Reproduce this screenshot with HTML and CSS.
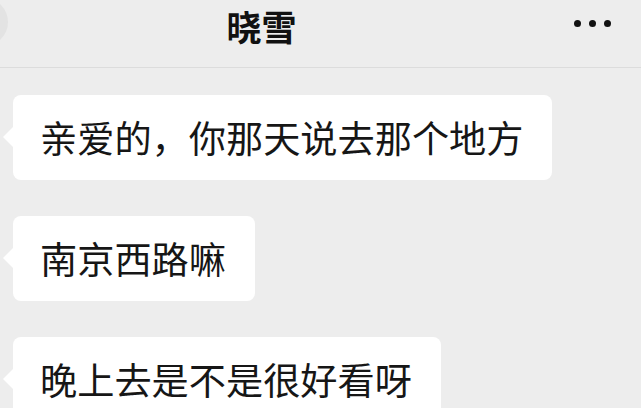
FILE: index.html
```html
<!DOCTYPE html>
<html lang="zh-CN">
<head>
  <meta charset="UTF-8" />
  <meta name="viewport" content="width=device-width, initial-scale=1.0"/>
  <title>晓雪</title>
  <link rel="stylesheet" href="styles.css">
</head>
<body>

  <div class="header">
    <div class="back"></div>
    <div class="title">晓雪</div>
    <div class="more"><span></span><span></span><span></span></div>
  </div>

  <div class="chat">
    <div class="msg">亲爱的，你那天说去那个地方</div>
    <div class="msg">南京西路嘛</div>
    <div class="msg">晚上去是不是很好看呀</div>
  </div>

</body>
</html>
```

FILE: styles.css
```css
body {
  margin: 0;
  background: #ededed;
  font-family: "Noto Sans CJK SC", "Noto Sans", sans-serif;
  color: #161616;
  overflow: hidden;
}
.header {
  position: relative;
  height: 67px;
  border-bottom: 1px solid #dcdcdc;
  display: flex;
  justify-content: center;
  align-items: flex-start;
}
.back {
  position: absolute;
  left: -40px;
  top: -2px;
  width: 48px;
  height: 48px;
  border-radius: 50%;
  background: #e3e3e3;
}
.title {
  margin-right: 118px;
  font-size: 35px;
  font-weight: bold;
  line-height: normal;
  color: #111;
}
.more {
  position: absolute;
  right: 30px;
  top: 20px;
  display: flex;
  gap: 8px;
}
.more span {
  width: 7px;
  height: 7px;
  border-radius: 50%;
  background: #111;
}
.chat {
  padding: 27px 0 0 13px;
  display: flex;
  flex-direction: column;
  align-items: flex-start;
  gap: 36px;
}
.msg {
  position: relative;
  background: #fff;
  border-radius: 8px;
  padding: 0 29px 0 27px;
  height: 85px;
  line-height: 85px;
  font-size: 37.2px;
  white-space: nowrap;
}
.msg::before {
  content: "";
  position: absolute;
  left: -10px;
  top: 32px;
  border-top: 10px solid transparent;
  border-bottom: 10px solid transparent;
  border-right: 10px solid #fff;
}
```
